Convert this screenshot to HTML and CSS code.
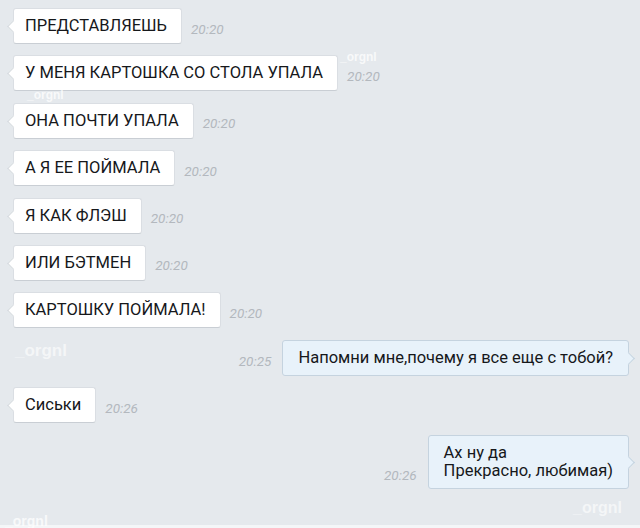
FILE: index.html
```html
<!DOCTYPE html>
<html lang="ru">
<head>
<meta charset="utf-8">
<link rel="stylesheet" href="styles.css">
</head>
<body>
<div class="chat">
  <div class="row in"><div class="bubble">ПРЕДСТАВЛЯЕШЬ</div><span class="time">20:20</span></div>
  <div class="row in"><div class="bubble">У МЕНЯ КАРТОШКА СО СТОЛА УПАЛА</div><span class="time">20:20</span></div>
  <div class="row in"><div class="bubble">ОНА ПОЧТИ УПАЛА</div><span class="time">20:20</span></div>
  <div class="row in"><div class="bubble">А Я ЕЕ ПОЙМАЛА</div><span class="time">20:20</span></div>
  <div class="row in"><div class="bubble">Я КАК ФЛЭШ</div><span class="time">20:20</span></div>
  <div class="row in"><div class="bubble">ИЛИ БЭТМЕН</div><span class="time">20:20</span></div>
  <div class="row in"><div class="bubble">КАРТОШКУ ПОЙМАЛА!</div><span class="time">20:20</span></div>
  <div class="row out"><span class="time">20:25</span><div class="bubble">Напомни мне,почему я все еще с тобой?</div></div>
  <div class="row in"><div class="bubble">Сиськи</div><span class="time">20:26</span></div>
  <div class="row out last"><span class="time">20:26</span><div class="bubble">Ах ну да<br>Прекрасно, любимая)</div></div>

  <span class="wm wm1">_orgnl</span>
  <span class="wm wm2">_orgnl</span>
  <span class="wm wm3">_orgnl</span>
  <span class="wm wm4">_orgnl</span>
  <span class="wm wm5">_orgnl</span>
</div>
</body>
</html>
```
FILE: styles.css
```css
html, body {
  margin: 0;
  padding: 0;
  background: #e5e9ed;
}
body {
  width: 640px;
  height: 528px;
  overflow: hidden;
  font-family: Roboto, "Noto Sans", sans-serif;
}
.chat {
  position: relative;
  height: 528px;
  box-sizing: border-box;
  padding: 8px 11px 0 13px;
  display: flex;
  flex-direction: column;
  gap: 11.4px;
  border-bottom: 3px solid #f4f6f8;
}
.row {
  display: flex;
  align-items: center;
}
.row.out {
  justify-content: flex-end;
}
.bubble {
  position: relative;
  background: #ffffff;
  border: 1px solid #dadee3;
  border-bottom-color: #c9ced4;
  border-radius: 3px;
  padding: 8px 14px 8px 11px;
  font-size: 16.5px;
  line-height: 18px;
  color: #16181b;
}
.row.in .bubble::before {
  content: "";
  position: absolute;
  left: -5px;
  top: 50%;
  width: 8px;
  height: 8px;
  margin-top: -4px;
  background: #ffffff;
  border-left: 1px solid #d4d9de;
  border-bottom: 1px solid #d4d9de;
  transform: rotate(45deg);
}
.row.out .bubble {
  background: #e8f2fa;
  border-color: #c5d3df;
  padding: 8px 15px 8px 15px;
}
.row.out .bubble::after {
  content: "";
  position: absolute;
  right: -5px;
  top: 50%;
  width: 8px;
  height: 8px;
  margin-top: -4px;
  background: #e8f2fa;
  border-right: 1px solid #c5d3df;
  border-top: 1px solid #c5d3df;
  transform: rotate(45deg);
}
.time {
  font-size: 13.5px;
  font-style: italic;
  color: #b3b8be;
  margin: 5px 9px 0;
}
.row.out .time {
  margin: 7px 11px 0;
}
.row.last {
  align-items: flex-end;
}
.row.last .time {
  margin-bottom: 6px;
}
.wm {
  position: absolute;
  color: rgba(255, 255, 255, 0.75);
  font-weight: bold;
  font-family: "Liberation Sans", Arial, sans-serif;
}
.wm1 { left: 340px; top: 50px; font-size: 12px; }
.wm2 { left: 27px; top: 88px; font-size: 12px; }
.wm3 { left: 15px; top: 341px; font-size: 17px; color: rgba(255,255,255,0.6); }
.wm4 { left: 573px; top: 499px; font-size: 16px; color: rgba(255,255,255,0.6); }
.wm5 { left: 5px; top: 513px; font-size: 14px; }
```
